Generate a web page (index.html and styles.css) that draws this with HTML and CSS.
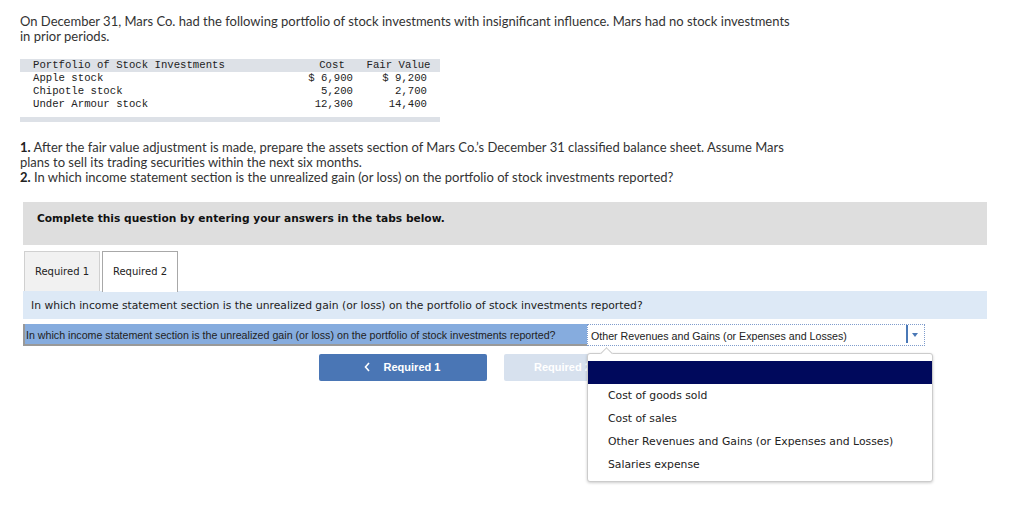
FILE: index.html
```html
<!DOCTYPE html>
<html lang="en">
<head>
  <meta charset="UTF-8">
  <title>Stock Investments</title>
  <link rel="stylesheet" href="styles.css">
</head>
<body>
  <div class="page">
    <p class="intro">On December 31, Mars Co. had the following portfolio of stock investments with insignificant influence. Mars had no stock investments in prior periods.</p>

    <table class="portfolio">
      <tr class="head">
        <td class="name">Portfolio of Stock Investments</td>
        <td class="cost">Cost</td>
        <td class="fair">Fair Value</td>
      </tr>
      <tr>
        <td class="name">Apple stock</td>
        <td class="cost num">$ 6,900</td>
        <td class="fair num">$ 9,200</td>
      </tr>
      <tr>
        <td class="name">Chipotle stock</td>
        <td class="cost num">5,200</td>
        <td class="fair num">2,700</td>
      </tr>
      <tr>
        <td class="name">Under Armour stock</td>
        <td class="cost num">12,300</td>
        <td class="fair num">14,400</td>
      </tr>
      <tr class="foot"><td colspan="3"></td></tr>
    </table>

    <p class="tasks">
      <b>1.</b> After the fair value adjustment is made, prepare the assets section of Mars Co.’s December 31 classified balance sheet. Assume Mars plans to sell its trading securities within the next six months.<br>
      <b>2.</b> In which income statement section is the unrealized gain (or loss) on the portfolio of stock investments reported?
    </p>
  </div>

  <div class="answer">
    <div class="notice">Complete this question by entering your answers in the tabs below.</div>

    <div class="tabs">
      <div class="tab">Required 1</div>
      <div class="tab active">Required 2</div>
    </div>

    <div class="prompt">In which income statement section is the unrealized gain (or loss) on the portfolio of stock investments reported?</div>

    <div class="answer-row">
      <div class="label">In which income statement section is the unrealized gain (or loss) on the portfolio of stock investments reported?</div>
      <div class="select">
        <span>Other Revenues and Gains (or Expenses and Losses)</span>
        <span class="arrow"></span>
      </div>
    </div>

    <div class="nav">
      <button class="btn prev">
        <svg class="chev" width="6" height="10" viewBox="0 0 6 10"><path d="M5 1 L1.5 5 L5 9" fill="none" stroke="#fff" stroke-width="1.6"/></svg>
        Required 1
      </button>
      <button class="btn next">
        Required 2
        <svg class="chev" width="6" height="10" viewBox="0 0 6 10"><path d="M1 1 L4.5 5 L1 9" fill="none" stroke="#fff" stroke-width="1.6"/></svg>
      </button>
    </div>

    <!-- open dropdown list -->
    <ul class="options">
      <li class="selected"></li>
      <li>Cost of goods sold</li>
      <li>Cost of sales</li>
      <li>Other Revenues and Gains (or Expenses and Losses)</li>
      <li>Salaries expense</li>
    </ul>
  </div>
</body>
</html>
```

FILE: styles.css
```css
html, body {
  min-height: 100%;
}

body {
  margin: 0;
  min-height: 519px;
  background: #fff;
  color: #333;
  font-family: Lato, "Open Sans", sans-serif;
}

.page {
  padding: 14px 0 0 20px;
  width: 776px;
}

.intro, .tasks {
  margin: 0;
  font-size: 13px;
  line-height: 15px;
}

.tasks b {
  color: #222;
}

/* portfolio table */
.portfolio {
  margin: 15px 0 0 0;
  width: 420px;
  border-collapse: collapse;
  font-family: "Liberation Mono", "Courier New", monospace;
  font-size: 10.67px;
  color: #222;
}

.portfolio td {
  padding: 0;
  height: 13px;
  line-height: 13px;
  white-space: pre;
}

.portfolio .head td {
  background: #dde1e7;
}

.portfolio .name {
  padding-left: 13px;
}

.portfolio .cost {
  width: 46px;
  text-align: center;
}

.portfolio .fair {
  width: 70px;
  text-align: center;
}

.portfolio .cost.num {
  text-align: right;
  padding-right: 4px;
}

.portfolio .fair.num {
  text-align: right;
  padding-right: 13px;
}

.portfolio .foot td {
  height: 5px;
  background: #dde1e7;
  border-top: 6px solid #fff;
}

.tasks {
  margin-top: 18px;
}

/* answer area */
.answer {
  position: relative;
  margin: 17px 0 0 23px;
  width: 964px;
  font-family: "DejaVu Sans", Verdana, sans-serif;
}

.notice {
  background: #dedede;
  padding: 10px 14px 19px;
  font-size: 10.65px;
  font-weight: bold;
  line-height: 14px;
  color: #111;
}

.tabs {
  display: flex;
  gap: 2px;
  margin-top: 6px;
  padding-left: 1px;
}

.tab {
  width: 76px;
  height: 40px;
  box-sizing: border-box;
  border: 1px solid #d0d0d0;
  border-bottom: none;
  background: #f1f1f1;
  font-size: 10px;
  line-height: 39px;
  text-align: center;
  color: #222;
}

.tab.active {
  height: 41px;
  background: #fff;
  border-color: #a8a8a8;
  margin-bottom: -1px;
}

.prompt {
  background: #dde9f6;
  height: 28px;
  line-height: 30px;
  padding-left: 8px;
  font-size: 10.75px;
  color: #222;
}

.answer-row {
  display: flex;
  margin-top: 5px;
  height: 22px;
}

.label {
  width: 561px;
  border-left: 2px solid #999;
  border-bottom: 2px solid #999;
  background: #86acde;
  font-family: "Liberation Sans", Arial, sans-serif;
  font-size: 10.67px;
  line-height: 22px;
  padding-left: 1px;
  color: #222;
}

.select {
  width: 338px;
  box-sizing: border-box;
  border: 1px dotted #7f9ccc;
  display: flex;
  align-items: center;
  justify-content: space-between;
  font-family: "Liberation Sans", Arial, sans-serif;
  font-size: 10.67px;
  color: #222;
  padding: 2px 0 0 3px;
}

.arrow {
  position: relative;
  width: 16px;
  height: 18px;
  margin-top: -4px;
  border-left: 2px solid #4a78b6;
}

.arrow::after {
  content: "";
  position: absolute;
  left: 4px;
  top: 8px;
  border-left: 3px solid transparent;
  border-right: 3px solid transparent;
  border-top: 4px solid #4a78b6;
}

.nav {
  display: flex;
  gap: 17px;
  margin: 8px 0 0 296px;
}

.btn {
  display: flex;
  align-items: center;
  justify-content: center;
  gap: 14px;
  width: 168px;
  height: 27px;
  border: none;
  border-radius: 2px;
  color: #fff;
  font-family: "Liberation Sans", Arial, sans-serif;
  font-size: 11px;
  font-weight: bold;
  padding: 0 0 2px;
}

.btn.prev {
  background: #4a76b5;
  padding-right: 2px;
}

.btn.next {
  background: #d7e1ee;
  justify-content: flex-start;
  padding-left: 30px;
}

/* open dropdown */
.options {
  position: absolute;
  left: 564px;
  top: 151px;
  width: 344px;
  margin: 0;
  padding: 7px 0 5px;
  list-style: none;
  background: #fff;
  border: 1px solid #ccc;
  border-radius: 3px;
  box-shadow: 0 1px 3px rgba(0, 0, 0, 0.2);
  font-size: 10.8px;
  color: #222;
}

.options::before {
  content: "";
  position: absolute;
  left: 14px;
  top: -5px;
  width: 8px;
  height: 8px;
  background: #fff;
  border-left: 1px solid #ccc;
  border-top: 1px solid #ccc;
  transform: rotate(45deg);
}

.options li {
  height: 23px;
  line-height: 23px;
  padding-left: 20px;
}

.options li.selected {
  background: #00095c;
}
```
